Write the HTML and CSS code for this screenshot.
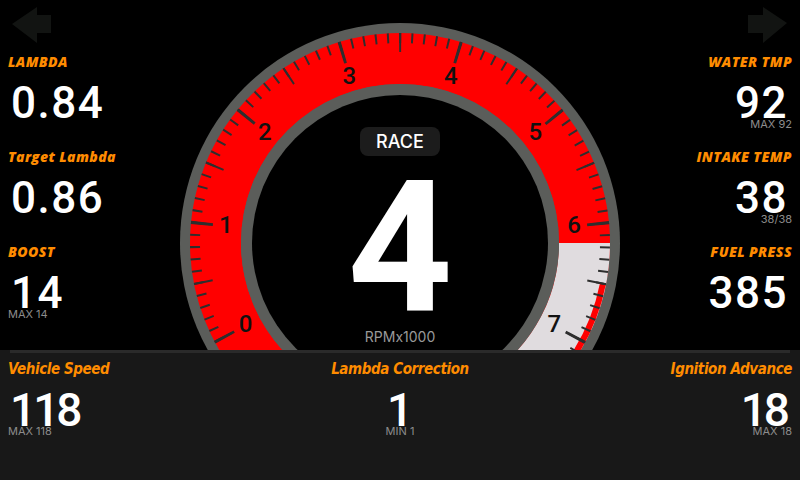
FILE: index.html
```html
<!DOCTYPE html>
<html lang="en">

<head>
    <meta charset="UTF-8">
    <meta name="viewport" content="width=device-width, initial-scale=1.0">
    <title>Dash</title>
    <link rel="stylesheet" href="styles.css">
</head>

<body>
    <div class="dash">
        <section class="top">
            <div class="side side-left">
                <div class="nav">
                    <svg class="arrow" width="39" height="36" viewBox="0 0 39 36">
                        <polygon points="0,17 25,0 25,8 39,8 39,26 25,26 25,36" />
                    </svg>
                </div>
                <div class="stat">
                    <div class="label">LAMBDA</div>
                    <div class="value">0.84</div>
                </div>
                <div class="stat">
                    <div class="label">Target Lambda</div>
                    <div class="value">0.86</div>
                </div>
                <div class="stat">
                    <div class="label">BOOST</div>
                    <div class="value">14</div>
                    <div class="sub">MAX 14</div>
                </div>
            </div>

            <div class="gauge">
                <svg class="dial" width="440" height="350" viewBox="0 0 440 350">
                    <circle cx="220" cy="243" r="220" fill="#5b5d5a" />
                    <circle cx="220" cy="243" r="184.5" fill="none" stroke="#ff0000" stroke-width="51" />
                    <!-- shift zone + redline -->
                    <path d="M404.5 243 A184.5 184.5 0 0 1 283.1 416.37" fill="none" stroke="#e0dcdf" stroke-width="51" />
                    <path d="M423.02 283.38 A207 207 0 0 1 290.8 437.52" fill="none" stroke="#ff0000" stroke-width="6" />
                    <circle cx="220" cy="243" r="159" fill="#5b5d5a" />
                    <circle cx="220" cy="243" r="148" fill="#000" />
                    <!-- ticks: minor / half / major -->
                    <path class="tick" d="M39.68 340.52 A205 205 0 1 1 306.64 428.79" stroke-width="10" stroke-dasharray="2 10.0755" />
                    <path class="tick" d="M43.65 338.4 A200.5 200.5 0 1 1 304.74 424.72" stroke-width="19" stroke-dasharray="2 57.052" />
                    <path class="tick" d="M45.21 338.13 A199 199 0 1 1 304.1 423.36" stroke-width="22" stroke-dasharray="3 114.221" />
                    <g class="nums">
                        <text x="65.66" y="323.5">0</text>
                        <text x="45.84" y="224.85">1</text>
                        <text x="84.72" y="131.98">2</text>
                        <text x="169.2" y="75.54">3</text>
                        <text x="270.8" y="75.54">4</text>
                        <text x="355.28" y="131.98">5</text>
                        <text x="394.16" y="224.85">6</text>
                        <text x="374.34" y="323.5">7</text>
                    </g>
                </svg>
                <div class="readout">
                    <div class="mode">RACE</div>
                    <div class="gear">4</div>
                    <div class="unit">RPMx1000</div>
                </div>
            </div>

            <div class="side side-right">
                <div class="nav">
                    <svg class="arrow" width="39" height="36" viewBox="0 0 39 36">
                        <polygon points="0,8 15,8 15,0 39,16 15,36 15,26 0,26" />
                    </svg>
                </div>
                <div class="stat">
                    <div class="label">WATER TMP</div>
                    <div class="value">92</div>
                    <div class="sub">MAX 92</div>
                </div>
                <div class="stat">
                    <div class="label">INTAKE TEMP</div>
                    <div class="value">38</div>
                    <div class="sub">38/38</div>
                </div>
                <div class="stat">
                    <div class="label">FUEL PRESS</div>
                    <div class="value">385</div>
                </div>
            </div>
        </section>

        <section class="panel">
            <div class="rule"></div>
            <div class="panel-row">
                <div class="cell cell-left">
                    <div class="label">Vehicle Speed</div>
                    <div class="value">118</div>
                    <div class="sub">MAX 118</div>
                </div>
                <div class="cell cell-center">
                    <div class="label">Lambda Correction</div>
                    <div class="value">1</div>
                    <div class="sub">MIN 1</div>
                </div>
                <div class="cell cell-right">
                    <div class="label">Ignition Advance</div>
                    <div class="value">18</div>
                    <div class="sub">MAX 18</div>
                </div>
            </div>
        </section>
    </div>
</body>

</html>
```

FILE: styles.css
```css
* {
    margin: 0;
    padding: 0;
    box-sizing: border-box;
}

body {
    width: 800px;
    height: 480px;
    overflow: hidden;
    background-color: #000;
    color: #fff;
    font-family: Roboto, sans-serif;
}

.dash {
    width: 800px;
    height: 480px;
    display: flex;
    flex-direction: column;
}

.top {
    height: 350px;
    display: grid;
    grid-template-columns: 180px 440px 180px;
}

/* side columns */
.side {
    display: flex;
    flex-direction: column;
    padding: 0 8px;
}

.side-right {
    align-items: flex-end;
    text-align: right;
}

.nav {
    height: 55px;
    padding-top: 7px;
}

.arrow {
    display: block;
    fill: #121412;
}

.side-left .arrow {
    margin-left: 4px;
}

.side-right .arrow {
    margin-right: 5px;
}

.stat {
    height: 95px;
    display: flex;
    flex-direction: column;
}

.side-right .stat {
    align-items: flex-end;
}

.label {
    color: #ff8c00;
    font-family: "Open Sans", sans-serif;
    font-weight: 800;
    font-style: italic;
    font-size: 14px;
    line-height: 14px;
    letter-spacing: 0.4px;
    margin-bottom: 12px;
    white-space: nowrap;
}

.value {
    font-family: Roboto, sans-serif;
    font-weight: 500;
    font-size: 44px;
    line-height: 44px;
    letter-spacing: 1.5px;
}

.side-left .value {
    padding-left: 3px;
}

.side-right .value {
    margin-right: 4px;
}

.sub {
    font-family: Inter, sans-serif;
    font-size: 11px;
    line-height: 11px;
    color: #8c8c8c;
    margin-top: -6px;
}

/* gauge */
.gauge {
    display: grid;
    overflow: hidden;
}

.dial,
.readout {
    grid-area: 1 / 1;
}

.dial {
    display: block;
}

.tick {
    fill: none;
    stroke: #2e2e2e;
}

.nums text {
    font-family: Roboto, sans-serif;
    font-weight: 500;
    font-size: 24px;
    fill: #111;
    text-anchor: middle;
    dominant-baseline: central;
}

.readout {
    display: flex;
    flex-direction: column;
    align-items: center;
    padding-top: 127px;
}

.mode {
    width: 80px;
    height: 29px;
    line-height: 29px;
    text-align: center;
    border-radius: 8px;
    background-color: #1c1c1c;
    font-family: Inter, sans-serif;
    font-weight: 500;
    font-size: 18px;
}

.gear {
    margin-top: 1px;
    font-family: Roboto, sans-serif;
    font-weight: 700;
    font-size: 183px;
    line-height: 183px;
}

.unit {
    margin-top: -10px;
    font-family: Inter, sans-serif;
    font-size: 14px;
    line-height: 14px;
    color: #999;
}

/* bottom panel */
.panel {
    flex: 1;
    background-color: #181818;
}

.rule {
    height: 3px;
    margin: 0 10px;
    background-color: #2a2a2a;
}

.panel-row {
    display: grid;
    grid-template-columns: 1fr 1fr 1fr;
    padding: 8px 8px 0;
}

.cell {
    display: flex;
    flex-direction: column;
}

.cell-center {
    align-items: center;
}

.cell-right {
    align-items: flex-end;
}

.cell .label {
    font-family: "DejaVu Sans Condensed", sans-serif;
    font-weight: 700;
    font-size: 15px;
    line-height: 16px;
    letter-spacing: -0.4px;
    margin-bottom: 10px;
}

.cell .value {
    font-size: 46px;
    line-height: 46px;
    letter-spacing: -3px;
}

.cell-left .value {
    padding-left: 2px;
}

.cell-center .value {
    margin-left: -3px;
}

.cell-right .value {
    margin-right: 5px;
}

.cell .sub {
    margin-top: -7px;
}
```
